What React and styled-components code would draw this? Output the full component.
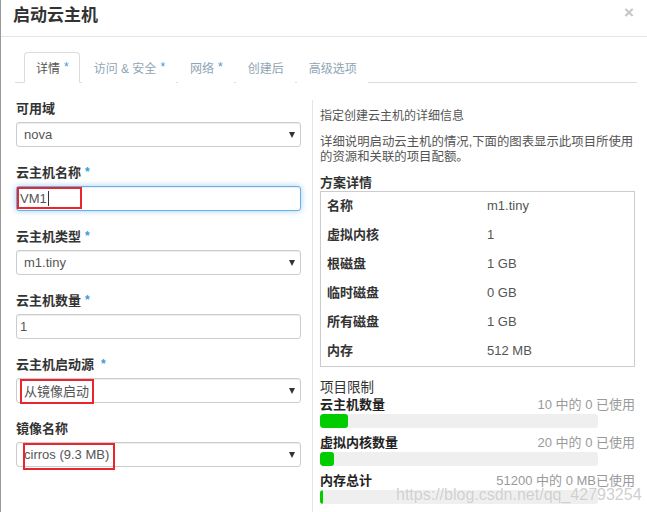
import styled, { createGlobalStyle } from "styled-components";

const GlobalStyle = createGlobalStyle`
  html, body {
    margin: 0;
    padding: 0;
    background: #ffffff;
  }
  body {
    font-family: "Liberation Sans", "Noto Sans CJK SC", sans-serif;
    font-size: 13px;
    color: #333;
  }
  * {
    box-sizing: border-box;
  }
`;

const Dialog = styled.div`
  position: relative;
  width: 647px;
  height: 512px;
  overflow: hidden;
  border-left: 1px solid #9a9a9a;
  background: #fff;
`;

const Header = styled.div`
  height: 37px;
  display: flex;
  align-items: center;
  justify-content: space-between;
  padding: 0 13px 0 12px;
  border-bottom: 1px solid #e5e5e5;
`;

const Title = styled.h4`
  margin: 0;
  font-size: 17px;
  font-weight: bold;
  color: #333;
  line-height: 20px;
  margin-top: -5px;
`;

const Close = styled.span`
  font-size: 17px;
  font-weight: bold;
  color: #c4c4c4;
  margin-top: -10px;
  font-family: "Liberation Sans", sans-serif;
`;

const Body = styled.div`
  padding: 0 10px 0 14px;
`;

const Tabs = styled.ul`
  list-style: none;
  margin: 15px 0 0;
  padding: 0 0 0 9px;
  display: flex;
  height: 31px;
  border-bottom: 1px solid #dcdcdc;
`;

const Tab = styled.li`
  height: 31px;
  padding: 0 10px 0 11px;
  margin-right: 2px;
  display: flex;
  align-items: center;
  font-size: 12px;
  color: ${(p) => (p.$active ? "#555" : "#8fa5b4")};
  border: 1px solid ${(p) => (p.$active ? "#dcdcdc" : "transparent")};
  border-bottom-color: ${(p) => (p.$active ? "#fff" : "transparent")};
  border-radius: 4px 4px 0 0;
  background: #fff;
`;

const Star = styled.span`
  color: #3c9ad6;
  font-size: 12px;
  margin-left: ${(p) => p.$gap || "4px"};
  position: relative;
  top: -1px;
`;

const Content = styled.div`
  display: grid;
  grid-template-columns: 285px 323px;
  column-gap: 11px;
  padding-left: 1px;
`;

const LeftCol = styled.div`
  padding-top: 17px;
`;

const FormGroup = styled.div`
  margin-bottom: 17px;
`;

const Label = styled.div`
  font-weight: bold;
  font-size: 13px;
  line-height: 18px;
  margin-bottom: 4px;
  color: #333;
`;

const Field = styled.div`
  position: relative;
  height: 25px;
  display: flex;
  align-items: center;
  padding: ${(p) => (p.$select ? "0 5px 0 7px" : "0 3px")};
  border: 1px solid ${(p) => (p.$focus ? "#66afe9" : "#cccccc")};
  border-radius: 3px;
  box-shadow: ${(p) =>
    p.$focus
      ? "inset 0 1px 1px rgba(0,0,0,.075), 0 0 6px rgba(102,175,233,.6)"
      : "inset 0 1px 1px rgba(0,0,0,.075)"};
  font-size: 13px;
  color: #555;
  background: #fff;
`;

const Value = styled.span`
  flex: 1;
  white-space: nowrap;
`;

const Cursor = styled.span`
  display: inline-block;
  width: 1px;
  height: 15px;
  background: #333;
  vertical-align: -3px;
  margin-left: 1px;
`;

const Caret = styled.span`
  width: 0;
  height: 0;
  border-left: 3.5px solid transparent;
  border-right: 3.5px solid transparent;
  border-top: 6px solid #333;
`;

const Mark = styled.div`
  position: absolute;
  left: ${(p) => p.$left}px;
  top: ${(p) => p.$top}px;
  width: ${(p) => p.$width}px;
  height: ${(p) => p.$height}px;
  border: 2px solid #e8262c;
  pointer-events: none;
`;

const RightCol = styled.div`
  border-left: 1px solid #e5e5e5;
  margin-top: 17px;
  padding: 9px 0 0 7px;
  height: 420px;
`;

const Intro = styled.p`
  margin: 0;
  font-size: 12px;
  line-height: 15px;
  color: #555;
`;

const Desc = styled.p`
  margin: 11px 0 0;
  font-size: 12.4px;
  line-height: 15px;
  color: #555;
  width: 314px;
`;

const SectionTitle = styled.div`
  margin-top: 10px;
  font-size: 13px;
  font-weight: bold;
  line-height: 16px;
  color: #333;
`;

const Table = styled.div`
  width: 315px;
  border: 1px solid #cccccc;
  padding: 0 0 0 6px;
`;

const Row = styled.div`
  display: grid;
  grid-template-columns: 160px 1fr;
  align-items: center;
  height: 29px;
  font-size: 13px;
  line-height: 16px;
  padding-bottom: 2px;
`;

const Key = styled.span`
  font-weight: bold;
  color: #333;
`;

const Val = styled.span`
  color: #555;
`;

const LimitsTitle = styled.div`
  margin-top: 13px;
  font-size: 13.5px;
  line-height: 16px;
  color: #333;
`;

const Limit = styled.div`
  margin-bottom: 6px;
  width: 315px;
`;

const LimitHead = styled.div`
  display: flex;
  justify-content: space-between;
  line-height: 17px;
  font-size: 13px;
`;

const LimitName = styled.span`
  font-weight: bold;
  color: #222;
`;

const LimitUsed = styled.span`
  color: #9a9a9a;
`;

const Bar = styled.div`
  width: 278px;
  height: 14px;
  margin-top: 1px;
  background: #efefef;
  border-radius: 3px;
  overflow: hidden;
`;

const Fill = styled.div`
  height: 100%;
  background: #00cc00;
  border-radius: 3px;
`;

const Watermark = styled.div`
  position: absolute;
  left: 395px;
  top: 486px;
  font-size: 16px;
  font-family: "Liberation Sans", sans-serif;
  color: rgba(195, 195, 195, 0.8);
  text-shadow: 0 0 1px #fff;
  pointer-events: none;
  white-space: nowrap;
`;

const flavor = [
  ["名称", "m1.tiny"],
  ["虚拟内核", "1"],
  ["根磁盘", "1 GB"],
  ["临时磁盘", "0 GB"],
  ["所有磁盘", "1 GB"],
  ["内存", "512 MB"],
];

const limits = [
  { name: "云主机数量", used: "10 中的 0 已使用", fill: 28 },
  { name: "虚拟内核数量", used: "20 中的 0 已使用", fill: 14 },
  { name: "内存总计", used: "51200 中的 0 MB已使用", fill: 3 },
];

const App = () => {
  return (
    <>
      <GlobalStyle />
      <Dialog>
        <Header>
          <Title>启动云主机</Title>
          <Close>×</Close>
        </Header>
        <Body>
          <Tabs>
            <Tab $active>
              详情<Star>*</Star>
            </Tab>
            <Tab>
              访问 &amp; 安全<Star>*</Star>
            </Tab>
            <Tab>
              网络<Star>*</Star>
            </Tab>
            <Tab>创建后</Tab>
            <Tab>高级选项</Tab>
          </Tabs>
          <Content>
            <LeftCol>
              <FormGroup>
                <Label>可用域</Label>
                <Field $select>
                  <Value>nova</Value>
                  <Caret />
                </Field>
              </FormGroup>
              <FormGroup>
                <Label>
                  云主机名称<Star>*</Star>
                </Label>
                <Field $focus>
                  <Value>
                    VM1
                    <Cursor />
                  </Value>
                  <Mark $left={0} $top={0} $width={65} $height={22} />
                </Field>
              </FormGroup>
              <FormGroup>
                <Label>
                  云主机类型<Star>*</Star>
                </Label>
                <Field $select>
                  <Value>m1.tiny</Value>
                  <Caret />
                </Field>
              </FormGroup>
              <FormGroup>
                <Label>
                  云主机数量<Star>*</Star>
                </Label>
                <Field>
                  <Value>1</Value>
                </Field>
              </FormGroup>
              <FormGroup>
                <Label>
                  云主机启动源<Star $gap="7px">*</Star>
                </Label>
                <Field $select>
                  <Value>从镜像启动</Value>
                  <Caret />
                  <Mark $left={3} $top={0} $width={74} $height={25} />
                </Field>
              </FormGroup>
              <FormGroup>
                <Label>镜像名称</Label>
                <Field $select>
                  <Value>cirros (9.3 MB)</Value>
                  <Caret />
                  <Mark $left={6} $top={0} $width={92} $height={27} />
                </Field>
              </FormGroup>
            </LeftCol>
            <RightCol>
              <Intro>指定创建云主机的详细信息</Intro>
              <Desc>
                详细说明启动云主机的情况,下面的图表显示此项目所使用的资源和关联的项目配额。
              </Desc>
              <SectionTitle>方案详情</SectionTitle>
              <Table>
                {flavor.map(([k, v]) => (
                  <Row key={k}>
                    <Key>{k}</Key>
                    <Val>{v}</Val>
                  </Row>
                ))}
              </Table>
              <LimitsTitle>项目限制</LimitsTitle>
              {limits.map((l) => (
                <Limit key={l.name}>
                  <LimitHead>
                    <LimitName>{l.name}</LimitName>
                    <LimitUsed>{l.used}</LimitUsed>
                  </LimitHead>
                  <Bar>
                    <Fill style={{ width: l.fill }} />
                  </Bar>
                </Limit>
              ))}
            </RightCol>
          </Content>
        </Body>
        <Watermark>https://blog.csdn.net/qq_42793254</Watermark>
      </Dialog>
    </>
  );
};

export default App;
